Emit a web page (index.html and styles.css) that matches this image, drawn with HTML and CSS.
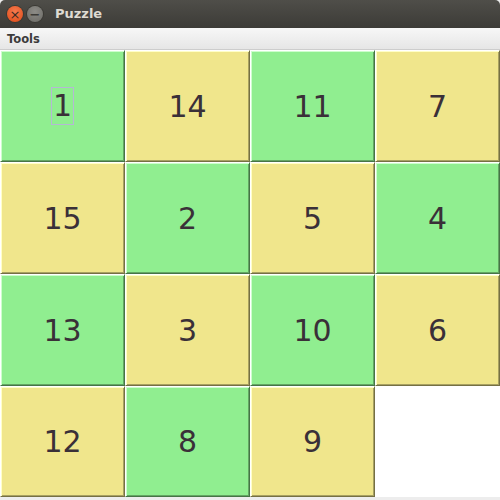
FILE: index.html
```html
<!DOCTYPE html>
<html>
<head>
<meta charset="utf-8">
<link rel="stylesheet" href="styles.css">
</head>
<body>
<div class="window">
  <div class="titlebar">
    <span class="btn close">×</span>
    <span class="btn minimize">−</span>
    <span class="title">Puzzle</span>
  </div>
  <div class="menubar"><span class="menu">Tools</span></div>
  <div class="board">
    <div class="tile green"><span class="focus">1</span></div>
    <div class="tile khaki">14</div>
    <div class="tile green">11</div>
    <div class="tile khaki">7</div>
    <div class="tile khaki">15</div>
    <div class="tile green">2</div>
    <div class="tile khaki">5</div>
    <div class="tile green">4</div>
    <div class="tile green">13</div>
    <div class="tile khaki">3</div>
    <div class="tile green">10</div>
    <div class="tile khaki">6</div>
    <div class="tile khaki">12</div>
    <div class="tile green">8</div>
    <div class="tile khaki">9</div>
    <div class="empty"></div>
  </div>
</div>
</body>
</html>
```

FILE: styles.css
```css
html, body {
  margin: 0;
  padding: 0;
  background: #ededed;
}
.window {
  width: 500px;
  height: 500px;
  display: flex;
  flex-direction: column;
  font-family: "DejaVu Sans", sans-serif;
}
.titlebar {
  height: 28px;
  flex: none;
  background: linear-gradient(#4f4e49, #3c3b37);
  border-radius: 5px 5px 0 0;
  display: flex;
  align-items: center;
  padding-left: 7px;
  box-sizing: border-box;
}
.btn {
  width: 16px;
  height: 16px;
  border-radius: 50%;
  display: flex;
  align-items: center;
  justify-content: center;
  font-size: 13px;
  line-height: 1;
  color: #3a2a22;
  margin-right: 4px;
}
.close {
  background: radial-gradient(circle at 50% 35%, #f57a4e, #df4a16);
  box-shadow: 0 0 0 1px #3a3934;
}
.minimize {
  background: radial-gradient(circle at 50% 35%, #8d8c87, #6b6a65);
  box-shadow: 0 0 0 1px #3a3934;
  color: #3c3b37;
  font-weight: bold;
}
.title {
  margin-left: 8px;
  color: #dfdbd2;
  font-weight: bold;
  font-size: 13px;
  margin-top: -1px;
}
.menubar {
  height: 21px;
  flex: none;
  background: linear-gradient(#f7f7f7, #e6e6e6);
  border-bottom: 1px solid #cdcdcd;
  display: flex;
  align-items: center;
  padding-left: 7px;
}
.menu {
  font-weight: bold;
  font-size: 11.5px;
  color: #3c3c3c;
}
.board {
  height: 447px;
  flex: none;
  display: grid;
  grid-template-columns: repeat(4, 125px);
  grid-template-rows: 112px 112px 112px 111px;
  background: #ffffff;
}
.tile {
  box-sizing: border-box;
  display: flex;
  align-items: center;
  justify-content: center;
  font-size: 30px;
  color: #3a3038;
  border: 1px solid;
}
.green {
  background: #90ee90;
  border-color: #ffffff #467446 #467446 #ffffff;
  box-shadow: inset 1px 1px 0 #cdffcd, inset -1px -1px 0 #64a664;
}
.khaki {
  background: #f0e68c;
  border-color: #ffffff #757044 #757044 #ffffff;
  box-shadow: inset 1px 1px 0 #ffffc8, inset -1px -1px 0 #a8a162;
}
.focus {
  display: inline-block;
  border: 1px solid #b4b8d4;
  padding: 0 1px;
  line-height: 36px;
  height: 36px;
}
.empty {
  background: #ffffff;
}
```
